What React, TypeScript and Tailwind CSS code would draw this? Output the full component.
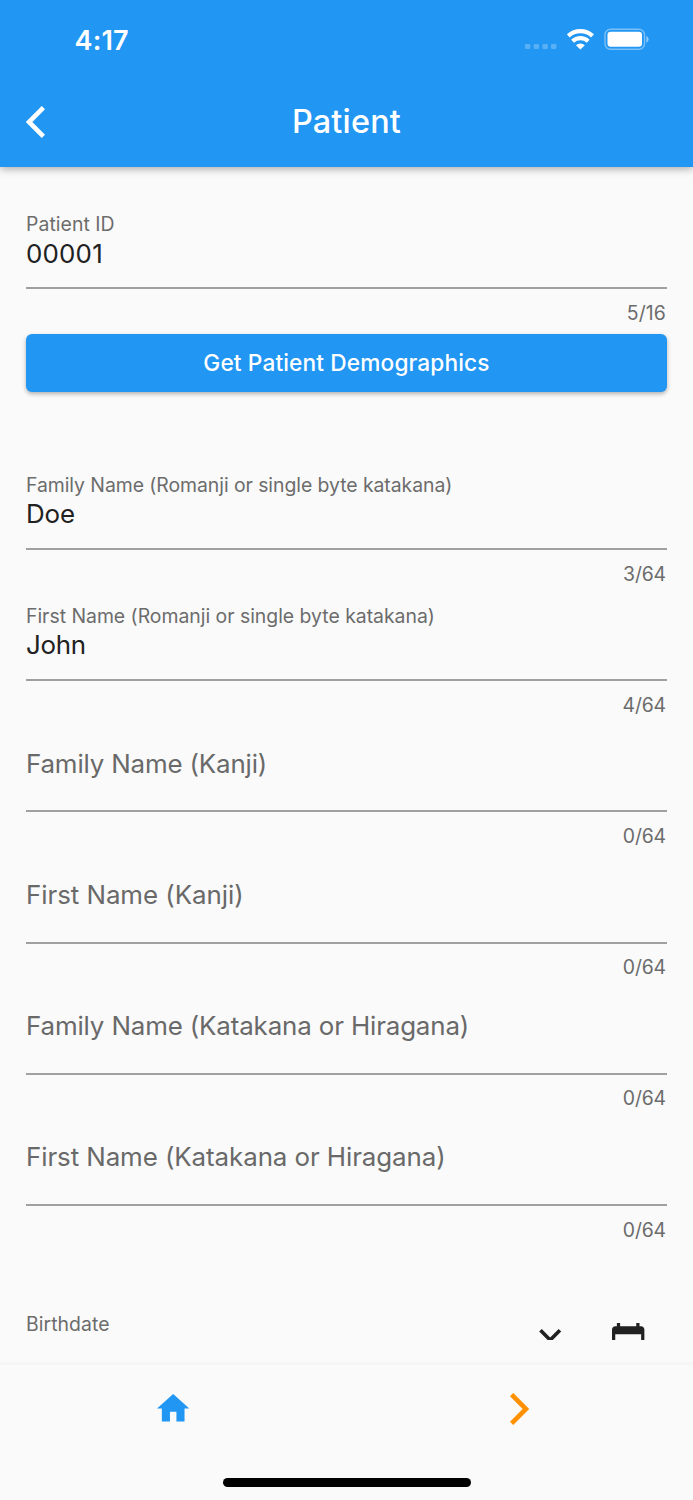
import React from 'react';
import clsx from 'clsx';

type FieldProps = {
    label: string;
    value?: string;
    max: number;
    labelSpacing: string;
    valueSpacing?: string;
};

const fields: FieldProps[] = [
    { label: 'Family Name (Romanji or single byte katakana)', value: 'Doe', max: 64, labelSpacing: 'tracking-[-0.05px]', valueSpacing: 'tracking-[-0.1px]' },
    { label: 'First Name (Romanji or single byte katakana)', value: 'John', max: 64, labelSpacing: 'tracking-[-0.01px]', valueSpacing: 'tracking-[-0.3px]' },
    { label: 'Family Name (Kanji)', max: 64, labelSpacing: 'tracking-[-0.16px]' },
    { label: 'First Name (Kanji)', max: 64, labelSpacing: 'tracking-[-0.05px]' },
    { label: 'Family Name (Katakana or Hiragana)', max: 64, labelSpacing: 'tracking-[-0.14px]' },
    { label: 'First Name (Katakana or Hiragana)', max: 64, labelSpacing: 'tracking-[-0.08px]' },
];

const Field: React.FC<FieldProps> = ({ label, value, max, labelSpacing, valueSpacing }) => (
    <div className="h-[131.2px]">
        <div className="h-[87.4px] whitespace-nowrap">
            {value ? (
                <>
                    <div className={clsx('pt-3 text-[19.4px] leading-6 text-[#6c6c6c]', labelSpacing)}>{label}</div>
                    <div className={clsx('pt-[2.7px] text-[25.9px] leading-[30px] text-[#212121]', valueSpacing)}>{value}</div>
                </>
            ) : (
                <div className={clsx('pt-[25.7px] text-[25.9px] leading-[30px] text-[#696969]', labelSpacing)}>{label}</div>
            )}
        </div>
        <div className="h-[2px] bg-[#a0a0a0]" />
        <div className={clsx('pr-px pt-[11.6px] text-right text-[19.4px] leading-6 text-[#6c6c6c]', max === 16 ? 'tracking-[0.15px]' : 'tracking-[-0.15px]')}>
            {value ? value.length : 0}/{max}
        </div>
    </div>
);

const StatusBar: React.FC = () => (
    <div className="flex h-[78px] items-center justify-between pl-[74.5px] pr-[44px]">
        <span className="pt-[3px] text-[27px] font-semibold leading-8 tracking-[0.15px]">4:17</span>
        <svg className="h-[22px] w-[124px]" viewBox="525 28 124 22" fill="none">
            {/* No signal */}
            <g fill="#fff" fillOpacity="0.25">
                <rect x="525" y="44" width="5.4" height="5" rx="1.3" />
                <rect x="533.7" y="44" width="5.4" height="5" rx="1.3" />
                <rect x="542.4" y="44" width="5.4" height="5" rx="1.3" />
                <rect x="551" y="44" width="5.4" height="5" rx="1.3" />
            </g>
            {/* Wifi */}
            <path d="M568.3 35.9a17.8 17.8 0 0 1 24.2 0M572.6 41.2a11.6 11.6 0 0 1 15.6 0" stroke="#fff" strokeWidth="4.2" />
            <path d="M580.4 49.6l-4.4-4.4a6.8 6.8 0 0 1 8.8 0z" fill="#fff" />
            {/* Battery */}
            <rect x="605" y="29.3" width="39.5" height="20" rx="5.5" stroke="#fff" strokeOpacity="0.4" strokeWidth="1.4" />
            <rect x="607.5" y="31.8" width="34.5" height="15" rx="3.2" fill="#fff" />
            <path d="M646.3 36c3 1.2 3 5.5 0 6.7z" fill="#fff" fillOpacity="0.5" />
        </svg>
    </div>
);

export default function App() {
    return (
        <div className="flex h-[1500px] w-[693px] flex-col overflow-hidden bg-[#fafafa] font-['Inter',sans-serif]">
            <header className="relative z-10 h-[167px] shrink-0 bg-[#2196f3] text-white shadow-[0_2px_8px_rgba(0,0,0,0.32)]">
                <StatusBar />
                <div className="grid h-[88px] grid-cols-[1fr_auto_1fr] items-center px-[26px]">
                    <svg className="h-8 w-[19px]" viewBox="0 0 19 32" fill="none" stroke="currentColor" strokeWidth="4.6">
                        <path d="M17.4 1.6 3 16l14.4 14.4" />
                    </svg>
                    <h1 className="text-[32.4px] font-medium leading-10 tracking-[0.2px]">Patient</h1>
                </div>
            </header>

            <main className="h-[1195px] shrink-0 px-[26px] pt-[33px]">
                <div className="h-[134px]">
                    <Field label="Patient ID" value="00001" max={16} labelSpacing="tracking-[0.06px]" valueSpacing="tracking-[0.2px]" />
                </div>
                <button className="block h-[58px] w-full rounded-[6px] bg-[#2196f3] text-[22.7px] font-medium tracking-[0.12px] text-white shadow-[0_2px_4px_rgba(0,0,0,0.3)]">
                    Get Patient Demographics
                </button>

                <div className="pt-[68.6px]">
                    {fields.map((f) => (
                        <Field key={f.label} {...f} />
                    ))}
                </div>

                {/* Birthdate row, cut off by the scroll viewport */}
                <div className="mt-[64px] flex h-[28px] items-start overflow-hidden">
                    <div className="flex-1 text-[19.4px] leading-6 tracking-[0.06px] text-[#6c6c6c]">Birthdate</div>
                    <svg className="mr-[50.5px] mt-[17.5px] h-[13.6px] w-[22.4px] shrink-0" viewBox="6 8.59 12 7.41" fill="#212121">
                        <path d="M16.59 8.59 12 13.17 7.41 8.59 6 10l6 6 6-6z" />
                    </svg>
                    <svg className="mr-[22.5px] mt-[11px] h-[35.6px] w-[32.4px] shrink-0" viewBox="2 1 20 22" fill="#212121">
                        <path d="M20 3h-1V1h-2v2H7V1H5v2H4c-1.1 0-2 .9-2 2v16c0 1.1.9 2 2 2h16c1.1 0 2-.9 2-2V5c0-1.1-.9-2-2-2zm0 18H4V8h16z" />
                    </svg>
                </div>
            </main>

            <nav className="flex flex-1 flex-col items-center border-t-[3px] border-[#f6f6f6]">
                <div className="grid h-[113px] w-full grid-cols-2 justify-items-center">
                    <svg className="mt-[29px] h-[27.6px] w-[32.4px]" viewBox="2 3 20 17" fill="#2196f3">
                        <path d="M10 20v-6h4v6h5v-8h3L12 3 2 12h3v8z" />
                    </svg>
                    <svg className="mt-[27.5px] h-8 w-[19px]" viewBox="0 0 19 32" fill="none" stroke="#ff9100" strokeWidth="4.6">
                        <path d="M1.6 1.6 16 16 1.6 30.4" />
                    </svg>
                </div>
                <div className="h-[9px] w-[248px] rounded-full bg-black" />
            </nav>
        </div>
    );
}
